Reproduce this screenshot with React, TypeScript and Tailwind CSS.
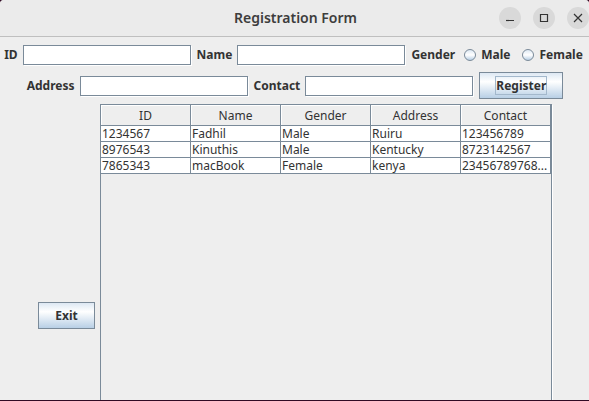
import { useState } from "react";
import type { ReactNode } from "react";

const columns = ["ID", "Name", "Gender", "Address", "Contact"];

const people = [
  ["1234567", "Fadhil", "Male", "Ruiru", "123456789"],
  ["8976543", "Kinuthis", "Male", "Kentucky", "8723142567"],
  ["7865343", "macBook", "Female", "kenya", "23456789768..."],
];

function Field({ id, label }: { id: string; label: string }) {
  return (
    <div className="flex items-center gap-[5px]">
      <label htmlFor={id}>{label}</label>
      <input
        id={id}
        type="text"
        className="h-5 w-[168px] border border-[#7a8a99] bg-white px-1 font-normal shadow-[1px_1px_0_#ffffff] outline-none"
      />
    </div>
  );
}

function Radio({ value }: { value: string }) {
  return (
    <label className="flex items-center gap-[5px] px-[3px]">
      <input
        type="radio"
        name="gender"
        value={value}
        className="size-3 appearance-none rounded-full border border-[#7a8a99] bg-linear-to-b from-[#dde8f3] via-white to-[#b8cfe5] checked:bg-[#333333]"
      />
      {value}
    </label>
  );
}

function WindowButton({ label, children }: { label: string; children: ReactNode }) {
  return (
    <button
      type="button"
      aria-label={label}
      className="flex size-[22px] items-center justify-center rounded-full bg-[#d9d9d9]"
    >
      <svg width="10" height="10" viewBox="0 0 10 10" fill="none" stroke="#333333" strokeWidth="1.2">
        {children}
      </svg>
    </button>
  );
}

const metalButton =
  "h-[27px] border border-[#7a8a99] bg-linear-to-b from-[#dde8f3] via-white via-35% to-[#b8cfe5] font-bold";

export default function App() {
  const [rows] = useState(people);

  return (
    <div className="h-screen overflow-hidden bg-[#300a24] pb-px font-['Noto_Sans','Open_Sans',sans-serif] text-xs text-[#333333]">
      <div className="flex h-full flex-col overflow-hidden rounded-t-[4px] bg-[#eeeeee]">
        <header className="grid h-[37px] shrink-0 grid-cols-[1fr_auto_1fr] items-center border-b border-[#bfbfbf] bg-[#ebebeb] pl-0.5">
          <h1 className="col-start-2 text-sm font-semibold text-[#3d3d3d]">Registration Form</h1>
          <div className="flex justify-end gap-3">
            <WindowButton label="Minimize">
              <path d="M1 7.5h8" />
            </WindowButton>
            <WindowButton label="Maximize">
              <path d="M1.5 1.5h7v7h-7z" />
            </WindowButton>
            <WindowButton label="Close">
              <path d="M1 1l8 8M9 1l-8 8" />
            </WindowButton>
          </div>
        </header>

        <form
          className="flex min-h-0 flex-1 flex-col gap-[5px] pt-[5px] pl-px"
          onSubmit={(event) => event.preventDefault()}
        >
          <div className="flex h-[25px] shrink-0 items-center justify-center gap-1.5 font-bold whitespace-nowrap">
            <Field id="person-id" label="ID" />
            <Field id="name" label="Name" />
            <span>Gender</span>
            <Radio value="Male" />
            <Radio value="Female" />
          </div>

          <div className="flex h-[27px] shrink-0 items-center justify-center gap-1.5 font-bold whitespace-nowrap">
            <Field id="address" label="Address" />
            <Field id="contact" label="Contact" />
            <button type="submit" className={`${metalButton} px-[15px]`}>
              <span className="block h-[19px] border border-[#a3b8cc] leading-[17px]">Register</span>
            </button>
          </div>

          <div className="flex h-[423px] shrink-0 items-center justify-center gap-[5px]">
            <button type="button" className={`${metalButton} w-[57px]`}>
              Exit
            </button>
            <div className="h-full w-[452px] border border-[#7a8a99] shadow-[1px_1px_0_#ffffff]">
              <table className="w-full table-fixed border-separate border-spacing-0">
                <thead>
                  <tr>
                    {columns.map((column) => (
                      <th
                        key={column}
                        className="h-[21px] border-r border-b border-[#7a8a99] px-0 pt-0.5 pb-0 leading-[18px] font-normal shadow-[inset_1px_1px_0_#ffffff]"
                      >
                        {column}
                      </th>
                    ))}
                  </tr>
                </thead>
                <tbody>
                  {rows.map((row) => (
                    <tr key={row[0]}>
                      {row.map((cell, index) => (
                        <td
                          key={columns[index]}
                          className="h-4 border-r border-b border-[#7a8a99] bg-white py-0 pr-0 pl-px leading-[15px] whitespace-nowrap"
                        >
                          {cell}
                        </td>
                      ))}
                    </tr>
                  ))}
                </tbody>
              </table>
            </div>
          </div>
        </form>
      </div>
    </div>
  );
}
